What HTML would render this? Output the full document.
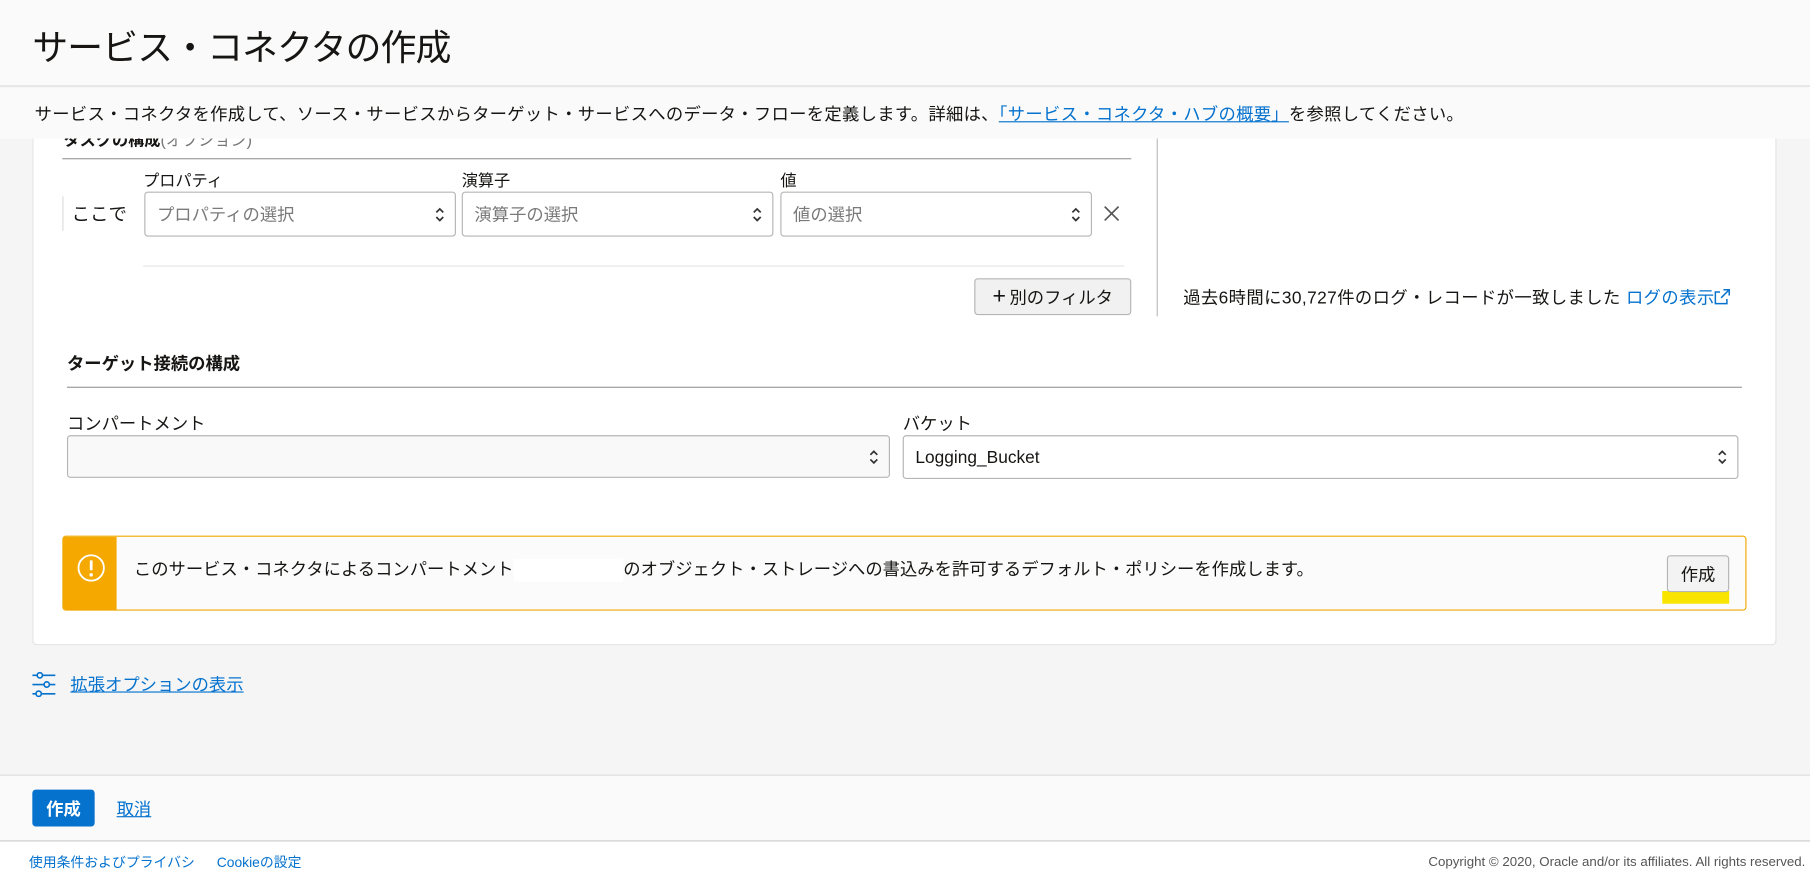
<!DOCTYPE html>
<html><head><meta charset="utf-8"><style>
*{box-sizing:border-box;margin:0;padding:0}
html,body{width:1810px;height:875px;overflow:hidden;background:#f5f5f5}
#w{position:absolute;left:0;top:0;width:1568px;height:758px;transform:scale(1.15434);transform-origin:0 0;font-family:"Liberation Sans","Noto Sans CJK JP",sans-serif;color:#161513;background:#f5f5f5}
.a{position:absolute}
.sel{position:absolute;border:1px solid #b5b5b5;border-radius:3px;background:#fff;font-size:15px;color:#7a7a7a;padding-left:10px;display:flex;align-items:center}
.arr{position:absolute;right:8px;top:50%;margin-top:-8px}
a{color:#0572ce}
</style></head><body><div id="w">
<div class="a" style="left:0;top:0;width:1568px;height:75px;background:#fafafa;border-bottom:1px solid #dcdcdc"></div>
<div class="a" style="left:28px;top:16px;font-size:31px;letter-spacing:-0.7px;color:#161513">サービス・コネクタの作成</div>
<div class="a" style="left:0;top:76px;width:1568px;height:44px;background:#fafafa"></div>
<div class="a" style="left:30px;top:88px;font-size:15px;letter-spacing:0.26px;white-space:nowrap">サービス・コネクタを作成して、ソース・サービスからターゲット・サービスへのデータ・フローを定義します。詳細は、<a style="text-decoration:underline">「サービス・コネクタ・ハブの概要」</a>を参照してください。</div>

<div class="a" style="left:28px;top:120px;width:1511px;height:439px;background:#fff;border:1px solid #e2e2e2;border-top:none;border-radius:0 0 4px 4px;overflow:hidden">
 <div class="a" style="left:26px;top:-9px;font-size:14px;font-weight:bold">タスクの構成<span style="font-weight:normal;color:#777">(オプション)</span></div>
</div>
<div class="a" style="left:54px;top:137px;width:926px;height:1px;background:#999"></div>
<div class="a" style="left:1002px;top:120px;width:1px;height:154px;background:#bbb"></div>
<div class="a" style="left:124px;top:146px;font-size:14px">プロパティ</div>
<div class="a" style="left:400px;top:146px;font-size:14px">演算子</div>
<div class="a" style="left:676px;top:146px;font-size:14px">値</div>
<div class="a" style="left:54px;top:170px;width:1px;height:30px;background:#ddd"></div>
<div class="a" style="left:62px;top:172px;font-size:16px">ここで</div>
<div class="sel" style="left:125px;top:166px;width:270px;height:39px">プロパティの選択<svg class="arr" width="10" height="16" viewBox="0 0 10 16"><path d="M2 6L5 3L8 6M2 10L5 13L8 10" fill="none" stroke="#333" stroke-width="1.5"/></svg></div>
<div class="sel" style="left:400px;top:166px;width:270px;height:39px">演算子の選択<svg class="arr" width="10" height="16" viewBox="0 0 10 16"><path d="M2 6L5 3L8 6M2 10L5 13L8 10" fill="none" stroke="#333" stroke-width="1.5"/></svg></div>
<div class="sel" style="left:676px;top:166px;width:270px;height:39px">値の選択<svg class="arr" width="10" height="16" viewBox="0 0 10 16"><path d="M2 6L5 3L8 6M2 10L5 13L8 10" fill="none" stroke="#333" stroke-width="1.5"/></svg></div>
<svg class="a" style="left:956px;top:178px" width="14" height="14" viewBox="0 0 14 14"><path d="M1 1L13 13M13 1L1 13" stroke="#555" stroke-width="1.4"/></svg>
<div class="a" style="left:124px;top:230px;width:850px;height:1px;background:#e4e4e4"></div>
<div class="a" style="left:844px;top:241px;width:136px;height:32px;border:1px solid #b5b5b5;border-radius:3px;background:#f1f1f1;font-size:15px;display:flex;align-items:center;justify-content:center"><span style="font-size:20px;font-weight:300;margin-right:3px">+</span>別のフィルタ</div>
<div class="a" style="left:1025px;top:247px;font-size:15px;letter-spacing:0.35px;white-space:nowrap">過去6時間に30,727件のログ・レコードが一致しました <a style="text-decoration:none">ログの表示</a><svg width="14" height="14" viewBox="0 0 14 14" style="vertical-align:-1px"><path d="M8 1H13V6M13 1L6 8M11 9V13H1V3H5" fill="none" stroke="#0572ce" stroke-width="1.3"/></svg></div>

<div class="a" style="left:58px;top:304px;font-size:15px;font-weight:bold">ターゲット接続の構成</div>
<div class="a" style="left:58px;top:335px;width:1451px;height:1px;background:#999"></div>
<div class="a" style="left:58px;top:356px;font-size:15px">コンパートメント</div>
<div class="a" style="left:782px;top:356px;font-size:15px">バケット</div>
<div class="sel" style="left:58px;top:377px;width:713px;height:37px;background:#f9f9f9"><svg class="arr" width="10" height="16" viewBox="0 0 10 16"><path d="M2 6L5 3L8 6M2 10L5 13L8 10" fill="none" stroke="#333" stroke-width="1.5"/></svg></div>
<div class="sel" style="left:782px;top:377px;width:724px;height:38px;color:#161513">Logging_Bucket<svg class="arr" width="10" height="16" viewBox="0 0 10 16"><path d="M2 6L5 3L8 6M2 10L5 13L8 10" fill="none" stroke="#333" stroke-width="1.5"/></svg></div>

<div class="a" style="left:54px;top:464px;width:1459px;height:65px;border:1px solid #f0a800;border-radius:3px;background:#fbfbfb;overflow:hidden">
 <div class="a" style="left:0;top:0;width:46px;height:65px;background:#f5a800"></div>
 <svg class="a" style="left:12px;top:15px" width="24" height="24" viewBox="0 0 24 24"><circle cx="12" cy="12" r="11" fill="none" stroke="#fff" stroke-width="1.6"/><path d="M12 5.5V14" stroke="#fff" stroke-width="2.4"/><circle cx="12" cy="18" r="1.5" fill="#fff"/></svg>
 <div class="a" style="left:61px;top:17px;font-size:15px;white-space:nowrap">このサービス・コネクタによるコンパートメント<span style="display:inline-block;width:95px;height:20px;background:#fff;vertical-align:middle"></span>のオブジェクト・ストレージへの書込みを許可するデフォルト・ポリシーを作成します。</div>
 <div class="a" style="left:1385px;top:47px;width:58px;height:11px;background:#f9e400"></div>
 <div class="a" style="left:1389px;top:16px;width:54px;height:32px;border:1px solid #b5b5b5;border-radius:3px;background:rgba(241,241,241,0.85);font-size:15px;display:flex;align-items:center;justify-content:center">作成</div>
</div>

<svg class="a" style="left:28px;top:582px" width="20" height="22" viewBox="0 0 20 22"><g fill="none" stroke="#0572ce" stroke-width="1.4"><path d="M0 3H4M9 3H20M0 11H10M15 11H20M0 19H3M8 19H20"/><circle cx="6.5" cy="3" r="2.3"/><circle cx="12.5" cy="11" r="2.3"/><circle cx="5.5" cy="19" r="2.3"/></g></svg>
<div class="a" style="left:61px;top:582px;font-size:15px"><a style="text-decoration:underline">拡張オプションの表示</a></div>

<div class="a" style="left:0;top:671px;width:1568px;height:58px;background:#fafafa;border-top:1px solid #dcdcdc;border-bottom:1px solid #ccc"></div>
<div class="a" style="left:28px;top:684px;width:54px;height:32px;background:#0572ce;border-radius:3px;color:#fff;font-size:15px;font-weight:bold;display:flex;align-items:center;justify-content:center">作成</div>
<div class="a" style="left:101px;top:690px;font-size:15px"><a style="text-decoration:underline">取消</a></div>
<div class="a" style="left:0;top:729px;width:1568px;height:29px;background:#fff"></div>
<div class="a" style="left:25px;top:738px;font-size:12px"><a style="text-decoration:none">使用条件およびプライバシ</a><a style="text-decoration:none;margin-left:19px">Cookieの設定</a></div>
<div class="a" style="right:4px;top:741px;font-size:11.5px;color:#555">Copyright © 2020, Oracle and/or its affiliates. All rights reserved.</div>
</div></body></html>
